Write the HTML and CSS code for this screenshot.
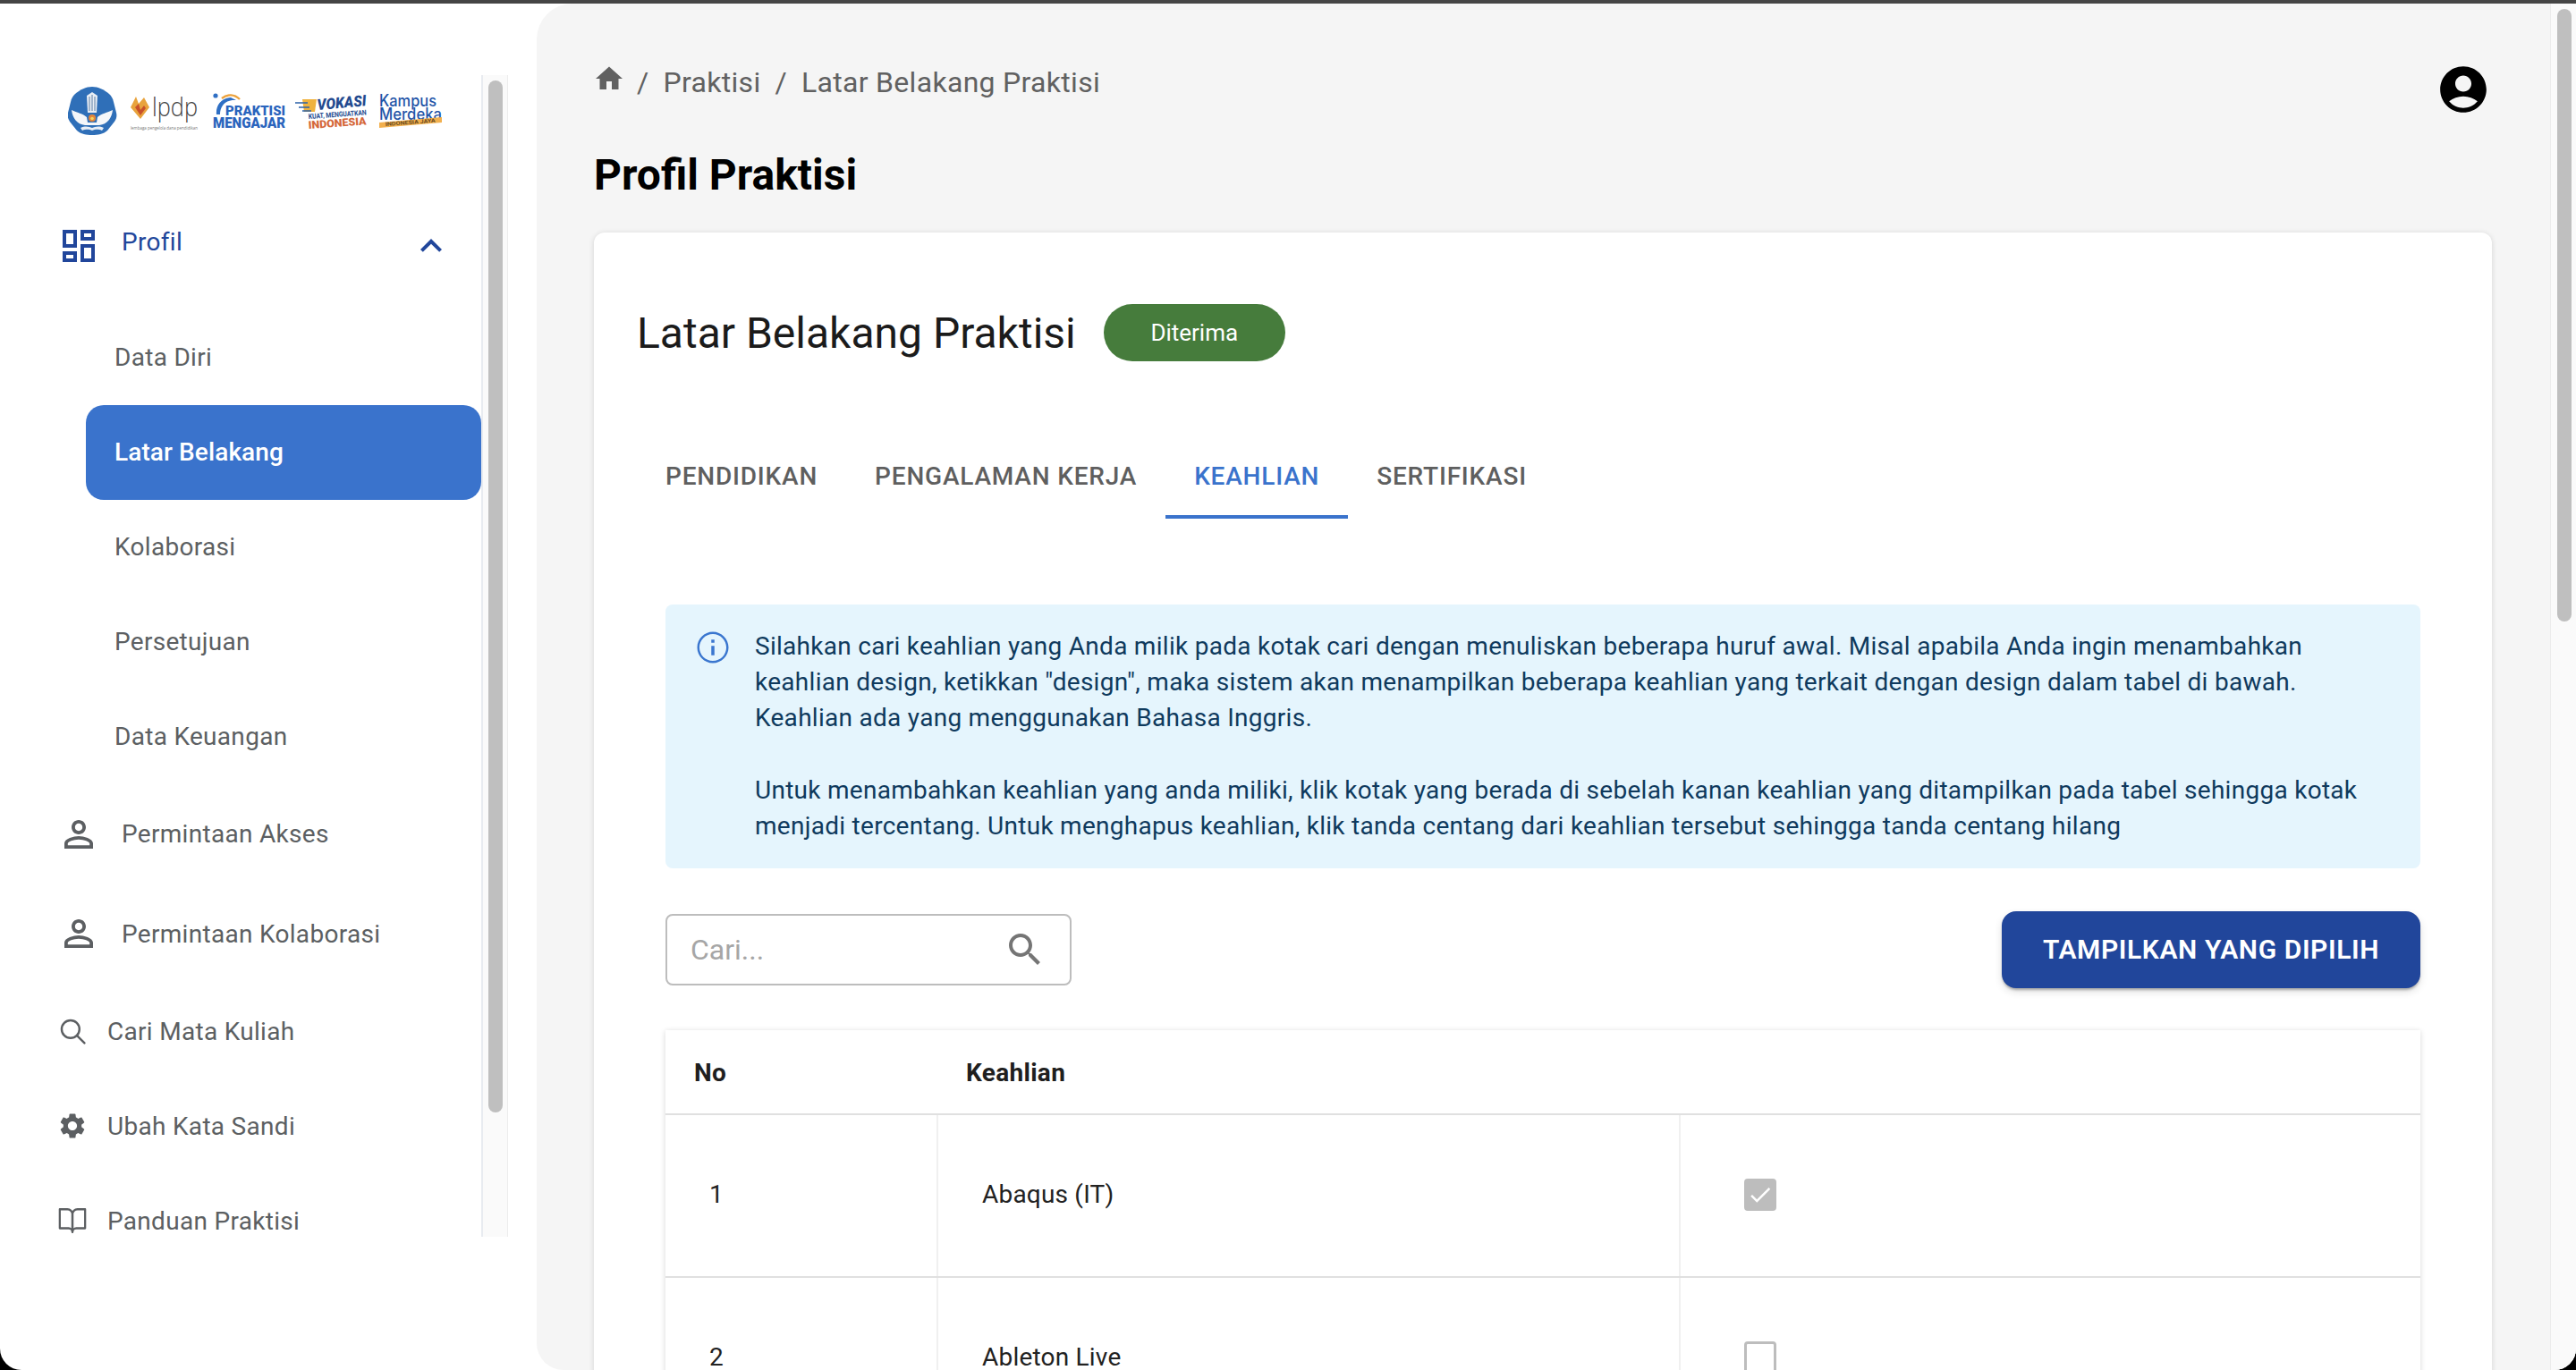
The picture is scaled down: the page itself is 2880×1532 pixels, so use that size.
FILE: index.html

```html
<!DOCTYPE html>
<html lang="en">
<head>
  <meta charset="UTF-8">
  <title>Profil Praktisi</title>
  <link rel="stylesheet" href="styles.css">
</head>
<body>
  <div class="window">
    <aside class="sidebar">
      <div class="side-scroll">
        <div class="logos">
          <svg class="logo-strip" viewBox="0 0 430 64" width="430" height="64">
            <!-- emblem -->
            <path d="M27 1 C34 1 40 4 46 9 C49 12 50 14 51 18 L54 30 C55 34 54 37 52 40 L44 50 C40 54 33 55 27 55 C21 55 14 54 10 50 L2 40 C0 37 -1 34 0 30 L3 18 C4 14 5 12 8 9 C14 4 20 1 27 1z" fill="#2f6fb8"/>
            <path d="M21 11 L27 7 L33 11 L32 30 L22 30z" fill="#e9eef5"/>
            <path d="M24 12 V28 M27 10 V28 M30 12 V28" stroke="#4a6f9c" stroke-width="0.9"/>
            <path d="M4 27 C10 30 17 31 21 35 L22 41 L32 41 L33 35 C37 31 44 30 50 27 C49 36 44 43 35 44 L19 44 C10 43 5 36 4 27z" fill="#f4f6f9"/>
            <path d="M14 47 C20 44 24 46 27 47 C30 46 34 44 40 47 L38 50 C33 48 30 49 27 50 C24 49 21 48 16 50z" fill="#e9eef5"/>
            <circle cx="27" cy="36" r="4" fill="#e2843a"/>
            <circle cx="27" cy="36.5" r="1.8" fill="#f4d35e"/>
            <!-- lpdp -->
            <path d="M70 24 L76 12 L79 20 L85 13 L91 24 L81 37z" fill="#e8a33d"/>
            <path d="M75 24 L79 20 L81 27 L85 22 L87 25 L81 33z" fill="#c8502a"/>
            <text x="94" y="34" class="logo-lpdp" textLength="51" lengthAdjust="spacingAndGlyphs">lpdp</text>
            <text x="70" y="49" class="logo-tiny" textLength="75" lengthAdjust="spacingAndGlyphs">lembaga pengelola dana pendidikan</text>
            <!-- praktisi mengajar -->
            <path d="M166 32 C165 22 171 14 182 13 L188 16 C177 15 170 22 170 32z" fill="#2f6fc4"/>
            <path d="M172 14 C178 9 186 9 192 15" stroke="#eda23c" stroke-width="2.4" fill="none"/>
            <circle cx="165" cy="11" r="2.6" fill="#2f6fc4"/>
            <text x="176" y="33" class="logo-prak" textLength="67" lengthAdjust="spacingAndGlyphs">PRAKTISI</text>
            <text x="162" y="47" class="logo-prak logo-prak-big" textLength="81" lengthAdjust="spacingAndGlyphs">MENGAJAR</text>
            <!-- vokasi -->
            <path d="M262 15 h16 l-2 14 h-12z" fill="#efb23e"/>
            <path d="M254 19 h14 M258 24 h12 M262 28 h10" stroke="#2b62a8" stroke-width="1.4"/>
            <text x="279" y="27" class="logo-vok" textLength="55" lengthAdjust="spacingAndGlyphs" transform="rotate(-5 279 27)">VOKASI</text>
            <text x="269" y="37" class="logo-vok-sub" textLength="65" lengthAdjust="spacingAndGlyphs" transform="rotate(-4 269 37)">KUAT, MENGUATKAN</text>
            <text x="269" y="48" class="logo-vok-red" textLength="65" lengthAdjust="spacingAndGlyphs" transform="rotate(-4 269 48)">INDONESIA</text>
            <!-- kampus merdeka -->
            <text x="348" y="23" class="logo-kampus" textLength="64" lengthAdjust="spacingAndGlyphs">Kampus</text>
            <text x="348" y="38" class="logo-kampus" textLength="70" lengthAdjust="spacingAndGlyphs">Merdeka</text>
            <path d="M348 41 L418 35 L418 41 L348 47z" fill="#f2b04e"/>
            <text x="355" y="45" class="logo-banner" textLength="56" lengthAdjust="spacingAndGlyphs" transform="rotate(-4.5 355 45)">INDONESIA JAYA</text>
          </svg>
        </div>

        <a class="nav-row nav-open">
          <svg class="icon-48" viewBox="0 0 24 24"><path d="M19 5v2h-4V5h4M9 5v6H5V5h4m10 8v6h-4v-6h4M9 17v2H5v-2h4M21 3h-8v6h8V3zM11 3H3v10h8V3zm10 8h-8v10h8V11zm-10 4H3v6h8v-6z"/></svg>
          <span class="nav-label">Profil</span>
          <svg class="icon-48 chevron" viewBox="0 0 24 24"><path d="M12 8l-6 6 1.41 1.41L12 10.83l4.59 4.58L18 14z"/></svg>
        </a>

        <a class="sub-row">Data Diri</a>
        <a class="sub-row active">Latar Belakang</a>
        <a class="sub-row">Kolaborasi</a>
        <a class="sub-row">Persetujuan</a>
        <a class="sub-row">Data Keuangan</a>

        <a class="nav-row nav-tall">
          <svg class="icon-48" viewBox="0 0 24 24"><path d="M12 5.9c1.16 0 2.1.94 2.1 2.1s-.94 2.1-2.1 2.1S9.9 9.16 9.9 8s.94-2.1 2.1-2.1m0 9c2.97 0 6.1 1.46 6.1 2.1v1.1H5.9V17c0-.64 3.13-2.1 6.1-2.1M12 4C9.79 4 8 5.79 8 8s1.79 4 4 4 4-1.79 4-4-1.79-4-4-4zm0 9c-2.67 0-8 1.34-8 4v3h16v-3c0-2.66-5.33-4-8-4z"/></svg>
          <span class="nav-label">Permintaan Akses</span>
        </a>
        <a class="nav-row nav-tall">
          <svg class="icon-48" viewBox="0 0 24 24"><path d="M12 5.9c1.16 0 2.1.94 2.1 2.1s-.94 2.1-2.1 2.1S9.9 9.16 9.9 8s.94-2.1 2.1-2.1m0 9c2.97 0 6.1 1.46 6.1 2.1v1.1H5.9V17c0-.64 3.13-2.1 6.1-2.1M12 4C9.79 4 8 5.79 8 8s1.79 4 4 4 4-1.79 4-4-1.79-4-4-4zm0 9c-2.67 0-8 1.34-8 4v3h16v-3c0-2.66-5.33-4-8-4z"/></svg>
          <span class="nav-label">Permintaan Kolaborasi</span>
        </a>
        <a class="nav-row nav-small">
          <svg class="icon-34 line-icon" viewBox="0 0 24 24" stroke-width="1.7" stroke-linecap="round"><circle cx="10.5" cy="10.5" r="7"/><path d="M15.8 15.8L21.5 21.5"/></svg>
          <span class="nav-label">Cari Mata Kuliah</span>
        </a>
        <a class="nav-row nav-small">
          <svg class="icon-34" viewBox="0 0 24 24"><path d="M19.14 12.94c.04-.3.06-.61.06-.94 0-.32-.02-.64-.07-.94l2.03-1.58c.18-.14.23-.41.12-.61l-1.92-3.32c-.12-.22-.37-.29-.59-.22l-2.39.96c-.5-.38-1.03-.7-1.62-.94l-.36-2.54c-.04-.24-.24-.41-.48-.41h-3.84c-.24 0-.43.17-.47.41l-.36 2.54c-.59.24-1.13.57-1.62.94l-2.39-.96c-.22-.08-.47 0-.59.22L2.74 8.87c-.12.21-.08.47.12.61l2.03 1.58c-.05.3-.09.63-.09.94s.02.64.07.94l-2.03 1.58c-.18.14-.23.41-.12.61l1.92 3.32c.12.22.37.29.59.22l2.39-.96c.5.38 1.03.7 1.62.94l.36 2.54c.05.24.24.41.48.41h3.84c.24 0 .44-.17.47-.41l.36-2.54c.59-.24 1.13-.56 1.62-.94l2.39.96c.22.08.47 0 .59-.22l1.92-3.32c.12-.22.07-.47-.12-.61l-2.01-1.58zM12 15.6c-1.98 0-3.6-1.62-3.6-3.6s1.62-3.6 3.6-3.6 3.6 1.62 3.6 3.6-1.62 3.6-3.6 3.6z"/></svg>
          <span class="nav-label">Ubah Kata Sandi</span>
        </a>
        <a class="nav-row nav-small">
          <svg class="icon-34 line-icon" viewBox="0 0 24 24" stroke-width="1.6" stroke-linejoin="round"><path d="M2 3h6a4 4 0 0 1 4 4v14a3 3 0 0 0-3-3H2z"/><path d="M22 3h-6a4 4 0 0 0-4 4v14a3 3 0 0 1 3-3h7z"/></svg>
          <span class="nav-label">Panduan Praktisi</span>
        </a>
      </div>
      <div class="side-track"><div class="side-thumb"></div></div>
    </aside>

    <main class="main">
      <div class="content">
        <div class="topbar">
          <nav class="breadcrumb">
            <svg class="crumb-home" viewBox="0 0 24 24"><path d="M10 20v-6h4v6h5v-8h3L12 3 2 12h3v8z"/></svg>
            <span class="crumb-sep">/</span>
            <span>Praktisi</span>
            <span class="crumb-sep">/</span>
            <span>Latar Belakang Praktisi</span>
          </nav>
          <svg class="avatar" viewBox="0 0 24 24"><path d="M12 2C6.48 2 2 6.48 2 12s4.48 10 10 10 10-4.48 10-10S17.52 2 12 2zm0 4c1.93 0 3.5 1.57 3.5 3.5S13.93 13 12 13s-3.5-1.57-3.5-3.5S10.07 6 12 6zm0 14c-2.03 0-4.43-.82-6.14-2.88C7.55 15.8 9.68 15 12 15s4.45.8 6.14 2.12C16.43 19.18 14.03 20 12 20z"/></svg>
        </div>

        <h1 class="page-title">Profil Praktisi</h1>

        <section class="card">
          <div class="card-head">
            <h2>Latar Belakang Praktisi</h2>
            <span class="badge">Diterima</span>
          </div>

          <div class="tabs">
            <a class="tab">Pendidikan</a>
            <a class="tab">Pengalaman Kerja</a>
            <a class="tab tab-active">Keahlian</a>
            <a class="tab">Sertifikasi</a>
          </div>

          <div class="panel">
            <div class="alert">
              <svg class="alert-icon" viewBox="0 0 24 24"><path d="M11 7h2v2h-2zm0 4h2v6h-2zm1-9C6.48 2 2 6.48 2 12s4.48 10 10 10 10-4.48 10-10S17.52 2 12 2zm0 18.6c-4.74 0-8.6-3.86-8.6-8.6S7.26 3.4 12 3.4s8.6 3.86 8.6 8.6-3.86 8.6-8.6 8.6z"/></svg>
              <p>Silahkan cari keahlian yang Anda milik pada kotak cari dengan menuliskan beberapa huruf awal. Misal apabila Anda ingin menambahkan<br>
              keahlian design, ketikkan "design", maka sistem akan menampilkan beberapa keahlian yang terkait dengan design dalam tabel di bawah.<br>
              Keahlian ada yang menggunakan Bahasa Inggris.<br><br>
              Untuk menambahkan keahlian yang anda miliki, klik kotak yang berada di sebelah kanan keahlian yang ditampilkan pada tabel sehingga kotak<br>
              menjadi tercentang. Untuk menghapus keahlian, klik tanda centang dari keahlian tersebut sehingga tanda centang hilang</p>
            </div>

            <div class="toolbar">
              <label class="search">
                <input type="text" placeholder="Cari...">
                <svg class="icon-48" viewBox="0 0 24 24"><path d="M15.5 14h-.79l-.28-.27C15.41 12.59 16 11.11 16 9.5 16 5.91 13.09 3 9.5 3S3 5.91 3 9.5 5.91 16 9.5 16c1.61 0 3.09-.59 4.23-1.57l.27.28v.79l5 4.99L20.49 19l-4.99-5zm-6 0C7.01 14 5 11.99 5 9.5S7.01 5 9.5 5 14 7.01 14 9.5 11.99 14 9.5 14z"/></svg>
              </label>
              <button class="btn-primary">Tampilkan yang dipilih</button>
            </div>

            <table class="skills">
              <colgroup>
                <col class="col-no">
                <col class="col-name">
                <col>
              </colgroup>
              <thead>
                <tr><th>No</th><th>Keahlian</th><th></th></tr>
              </thead>
              <tbody>
                <tr>
                  <td>1</td>
                  <td>Abaqus (IT)</td>
                  <td><span class="check check-on"><svg viewBox="0 0 24 24"><path d="M9 16.2L4.8 12l-1.4 1.4L9 19 21 7l-1.4-1.4z"/></svg></span></td>
                </tr>
                <tr>
                  <td>2</td>
                  <td>Ableton Live</td>
                  <td><span class="check"></span></td>
                </tr>
              </tbody>
            </table>
          </div>
        </section>
      </div>
      <div class="page-track"><div class="page-thumb"></div></div>
    </main>
  </div>
</body>
</html>
```

FILE: styles.css

```css
* {
  box-sizing: border-box;
}

html, body {
  margin: 0;
  height: 100%;
  overflow: hidden;
  background: #000;
}

body {
  font-family: 'Roboto', sans-serif;
  font-size: 28px;
  letter-spacing: 0.3px;
  color: #1f1f1f;
}

.window {
  display: flex;
  height: 1532px;
  border-top: 4px solid #454545;
  border-radius: 0 0 24px 24px;
  background: #fff;
  overflow: hidden;
}

/* sidebar */
.sidebar {
  position: relative;
  width: 600px;
  flex: none;
  padding-top: 80px;
}

.side-scroll {
  width: 538px;
  height: 1299px;
  overflow: hidden;
}

.logos {
  height: 134px;
  padding: 12px 0 0 76px;
}

.logo-strip {
  display: block;
  letter-spacing: 0;
}

.logo-lpdp { font: 300 29px 'Open Sans', sans-serif; fill: #3f3f3f; }
.logo-tiny { font: 400 6px 'Open Sans', sans-serif; fill: #777; }
.logo-prak { font: 900 15px 'Roboto', sans-serif; fill: #2a64bd; }
.logo-prak-big { font-size: 16px; }
.logo-vok { font: 900 italic 17px 'Roboto', sans-serif; fill: #234a8f; }
.logo-vok-sub { font: 700 8px 'Roboto', sans-serif; fill: #234a8f; }
.logo-vok-red { font: 900 12px 'Roboto', sans-serif; fill: #d5673a; }
.logo-kampus { font: 500 18px 'Inter', sans-serif; fill: #1f55a8; }
.logo-banner { font: 700 6px 'Roboto', sans-serif; fill: #6a4a20; }

.nav-row {
  display: flex;
  align-items: center;
  height: 106px;
  padding-left: 64px;
  color: #5c5f62;
}

.nav-row svg {
  fill: #5c5f62;
  flex: none;
}

.nav-row .line-icon {
  fill: none;
  stroke: #5c5f62;
}

.nav-label {
  margin-left: 24px;
}

.nav-open {
  height: 108px;
  margin-bottom: 21px;
  color: #21469b;
}

.nav-open .nav-label {
  transform: translateY(-2px);
}

.nav-open svg {
  fill: #21469b;
  transform: translateY(3px);
}

.nav-open .chevron {
  margin-left: auto;
  margin-right: 32px;
}

.nav-tall {
  height: 111.5px;
}

.nav-small {
  height: 106px;
}

.nav-small .nav-label {
  margin-left: 22px;
}

.icon-48 {
  width: 48px;
  height: 48px;
  flex: none;
}

.icon-34 {
  width: 34px;
  height: 34px;
}

.sub-row {
  display: flex;
  align-items: center;
  height: 106px;
  margin-left: 96px;
  padding: 0 0 2px 32px;
  border-radius: 20px;
  color: #5c5f62;
}

.sub-row.active {
  background: #3a73cc;
  color: #fff;
  font-weight: 500;
  letter-spacing: 0.1px;
}

/* overlay scrollbar of the sidebar list */
.side-track {
  position: absolute;
  left: 538px;
  top: 80px;
  width: 30px;
  height: 1299px;
  padding-top: 6px;
  background: #fafafa;
  border-left: 2px solid #e8ebf0;
  border-right: 1px solid #ececec;
}

.side-thumb {
  width: 16px;
  height: 1154px;
  margin-left: 6px;
  border-radius: 8px;
  background: #bfbfbf;
}

/* main area */
.main {
  flex: 1;
  display: flex;
  min-width: 0;
  background: #f5f5f5;
  border-radius: 40px 0 0 30px;
  overflow: hidden;
}

.content {
  flex: 1;
  min-width: 0;
  padding: 60px 65px 0 64px;
}

.topbar {
  display: flex;
  justify-content: space-between;
  align-items: center;
  height: 56px;
}

.breadcrumb {
  display: flex;
  align-items: center;
  gap: 16px;
  font-size: 32px;
  color: #616161;
}

.crumb-home {
  width: 36px;
  height: 36px;
  margin-left: -1px;
  margin-right: -3px;
  fill: #616161;
  transform: translateY(-4px);
}

.avatar {
  width: 62px;
  height: 62px;
  margin-right: 1px;
  transform: translateY(8px);
}

.page-title {
  margin: 40px 0 28px;
  font-size: 48px;
  line-height: 72px;
  font-weight: 700;
  letter-spacing: 0;
  color: #000;
}

.card {
  padding: 80px 48px 0;
  background: #fff;
  border-radius: 12px 12px 0 0;
  box-shadow: 0 1px 6px rgba(0,0,0,0.14);
}

.card-head {
  display: flex;
  align-items: center;
  height: 64px;
}

.card-head h2 {
  margin: 0;
  font-size: 48px;
  font-weight: 400;
  letter-spacing: 0;
  color: #1b1b1b;
}

.badge {
  display: flex;
  align-items: center;
  justify-content: center;
  width: 203px;
  height: 64px;
  margin-left: 31px;
  border-radius: 32px;
  background: #467c3c;
  color: #fff;
  font-size: 26px;
  letter-spacing: 0;
}

.tabs {
  display: flex;
  margin-top: 80px;
}

.tab {
  height: 96px;
  padding: 1px 32px 0;
  line-height: 96px;
  font-weight: 500;
  letter-spacing: 0.8px;
  text-transform: uppercase;
  color: #5f5f5f;
}

.tab-active {
  color: #3a73cc;
  border-bottom: 4px solid #3a73cc;
}

.panel {
  padding: 96px 32px 0;
}

.alert {
  display: flex;
  height: 295px;
  padding: 27px 36px 0;
  background: #e5f5fd;
  border-radius: 8px;
  color: #0f3a5d;
}

.alert p {
  margin: 0;
  line-height: 40.2px;
  letter-spacing: 0.28px;
  white-space: nowrap;
}

.alert-icon {
  width: 42px;
  height: 42px;
  margin: 0 26px 0 -4px;
  flex: none;
  fill: #3a76cf;
}

.toolbar {
  display: flex;
  align-items: center;
  justify-content: space-between;
  height: 86px;
  margin-top: 48px;
}

.search {
  display: flex;
  align-items: center;
  width: 454px;
  height: 80px;
  padding: 0 26px 0 26px;
  border: 2px solid #bdbdbd;
  border-radius: 8px;
}

.search input {
  flex: 1;
  min-width: 0;
  border: none;
  outline: none;
  padding: 0;
  font-family: inherit;
  font-size: 32px;
  background: transparent;
}

.search input::placeholder {
  color: #a6a6a6;
  opacity: 1;
}

.search svg {
  fill: #757575;
}

.btn-primary {
  width: 468px;
  height: 86px;
  padding: 0 0 2px;
  border: none;
  border-radius: 16px;
  background: #21469b;
  color: #fff;
  font-family: inherit;
  font-size: 30px;
  font-weight: 600;
  letter-spacing: 0.6px;
  text-transform: uppercase;
  box-shadow: 0 3px 3px -1px rgba(0,0,0,0.3), 0 4px 10px rgba(0,0,0,0.12);
}

.skills {
  width: 100%;
  margin-top: 47px;
  border-collapse: collapse;
  table-layout: fixed;
  background: #fff;
  box-shadow: 0 1px 6px rgba(0,0,0,0.16);
}

.col-no {
  width: 304px;
}

.col-name {
  width: 830px;
}

.skills th {
  height: 94px;
  padding: 2px 0 0 32px;
  text-align: left;
  font-weight: 700;
  color: #1f1f1f;
  border-bottom: 2px solid #e0e0e0;
}

.skills td {
  height: 182px;
  padding: 0 0 3px 49px;
  line-height: 28px;
  letter-spacing: 0.2px;
  color: #222;
  border-bottom: 2px solid #e0e0e0;
  border-left: 2px solid #f0f0f0;
}

.skills td:first-child {
  border-left: none;
}

.skills td:last-child {
  padding-left: 71px;
}

.check {
  display: block;
  width: 36px;
  height: 36px;
  border: 3px solid #bdbdbd;
  border-radius: 4px;
}

.check-on {
  background: #bdbdbd;
}

.check svg {
  display: block;
  width: 30px;
  height: 30px;
  fill: #fff;
}

/* page scrollbar */
.page-track {
  width: 29px;
  flex: none;
  padding: 6px 0 0 7px;
  background: #fafafa;
  border-left: 1px solid #ececec;
}

.page-thumb {
  width: 16px;
  height: 685px;
  border-radius: 8px;
  background: #bfbfbf;
}
```
